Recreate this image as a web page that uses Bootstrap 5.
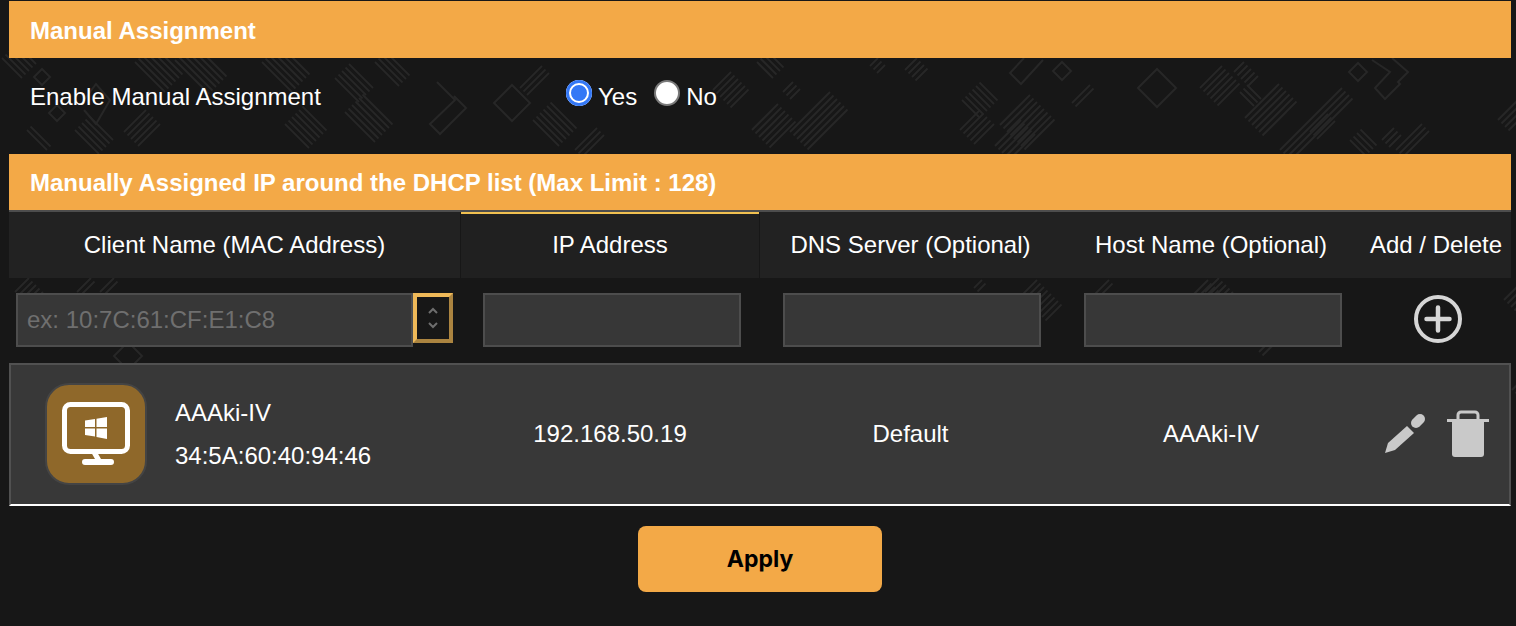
<!DOCTYPE html>
<html lang="en">
<head>
    <meta charset="UTF-8">
    <title>Manual Assignment</title>
    <link href="https://cdn.jsdelivr.net/npm/bootstrap@5.3.3/dist/css/bootstrap.min.css" rel="stylesheet">
    <style>
        body {
          background: #171717;
          color: #fff;
          font-family: "Liberation Sans", Arial, sans-serif;
          font-size: 24px;
          overflow: hidden;
        }
        .page-wrap {
          padding: 1px 5px 0 9px;
          width: 1516px;
          height: 626px;
        }
        .bg-art {
          position: absolute;
          left: 0;
          top: 0;
          z-index: 0;
        }
        .page-wrap > * {
          position: relative;
          z-index: 1;
        }
        .section-bar {
          background: #f3a947;
          font-weight: 700;
          height: 57px;
          padding: 2px 0 0 21px;
        }
        .section-bar.second {
          height: 56px;
        }
        .enable-row {
          height: 96px;
          padding: 0 0 18px 21px;
        }
        .enable-label {
          width: 536px;
        }
        .ring-radio {
          width: 26px;
          height: 26px;
          border-radius: 50%;
          background: #fff;
          border: 2px solid #7a7a7a;
          margin-right: 6px;
          margin-top: -8px;
        }
        .ring-radio.on {
          background: #3478f6;
          border: 0;
          box-shadow: inset 0 0 0 3px #3478f6, inset 0 0 0 5px #fff;
        }
        .radio-text {
          margin-right: 17px;
        }
        .col-grid {
          display: grid;
          grid-template-columns: 451px 300px 301px 300px 150px;
        }
        .head-grid {
          border-top: 2px solid #4d4d4d;
          height: 68px;
          text-align: center;
        }
        .head-cell {
          background: #222;
        }
        .head-cell.active {
          background: #202020;
          border-top: 2px solid #f0c050;
          padding-bottom: 2px;
          margin: 0 1px;
        }
        .input-grid {
          height: 85px;
          padding-top: 15px;
        }
        .fake-input {
          background: #373737;
          border: 2px solid #4d4d4d;
          border-radius: 0;
          color: #fff;
          height: 54px;
          font-size: 24px;
          box-shadow: none;
        }
        .fake-input:focus {
          background: #373737;
          border-color: #4d4d4d;
          color: #fff;
          box-shadow: none;
        }
        .fake-input::placeholder {
          color: #6f6f6f;
          opacity: 1;
        }
        .mac-input {
          width: 397px;
          margin-left: 7px;
          padding: 0 9px;
        }
        .plain-input {
          width: 258px;
          margin-left: 23px;
        }
        .pick-btn {
          width: 40px;
          height: 50px;
          border: 4px solid;
          border-color: #efb958 #ab8440 #ab8440 #efb958;
          background: #171717;
          padding: 0;
        }
        .add-icon {
          margin-left: 4px;
        }
        .client-row {
          background: #383838;
          border-top: 2px solid #515151;
          border-left: 2px solid #515151;
          border-right: 2px solid #515151;
          border-bottom: 2px solid #fff;
          height: 143px;
          padding-bottom: 2px;
          grid-template-columns: 449px 300px 301px 300px 148px;
        }
        .device-tile {
          width: 102px;
          height: 102px;
          border-radius: 24px;
          background: #8f682a;
          border: 2px solid #444;
          margin-left: 34px;
          margin-right: 28px;
        }
        .client-text {
          line-height: 43px;
        }
        .edit-icon {
          margin-left: 23px;
        }
        .trash-icon {
          margin-left: 21px;
        }
        .apply-btn {
          width: 244px;
          height: 66px;
          background: #f3a947;
          border: 0;
          border-radius: 8px;
          color: #000;
          font-family: Inter, "Liberation Sans", sans-serif;
          font-size: 23px;
          font-weight: 700;
        }
        .apply-wrap {
          padding-top: 20px;
        }
    </style>
</head>
<body>

<svg class="bg-art" id="bgArt" width="1516" height="626" fill="none" stroke="#272727" stroke-width="2"></svg>

<div class="page-wrap">
    <div class="section-bar d-flex align-items-center">Manual Assignment</div>

    <div class="enable-row d-flex align-items-center">
        <div class="enable-label">Enable Manual Assignment</div>
        <span class="ring-radio on"></span><span class="radio-text">Yes</span>
        <span class="ring-radio"></span><span>No</span>
    </div>

    <div class="section-bar second d-flex align-items-center">Manually Assigned IP around the DHCP list (Max Limit : 128)</div>

    <div class="col-grid head-grid">
        <div class="head-cell d-flex align-items-center justify-content-center">Client Name (MAC Address)</div>
        <div class="head-cell active d-flex align-items-center justify-content-center">IP Address</div>
        <div class="head-cell d-flex align-items-center justify-content-center">DNS Server (Optional)</div>
        <div class="head-cell d-flex align-items-center justify-content-center">Host Name (Optional)</div>
        <div class="head-cell d-flex align-items-center justify-content-center">Add / Delete</div>
    </div>

    <div class="col-grid input-grid">
        <div class="d-flex align-items-start">
            <input class="form-control fake-input mac-input" placeholder="ex: 10:7C:61:CF:E1:C8">
            <button type="button" class="pick-btn d-flex align-items-center justify-content-center" aria-label="Pick client">
                <svg width="12" height="22" viewBox="0 0 12 22" fill="none" stroke="#6e6e6e" stroke-width="2"><path d="M2 6l4-4 4 4M2 16l4 4 4-4"/></svg>
            </button>
        </div>
        <div><input class="form-control fake-input plain-input" aria-label="IP Address"></div>
        <div><input class="form-control fake-input plain-input" aria-label="DNS Server"></div>
        <div><input class="form-control fake-input plain-input" aria-label="Host Name"></div>
        <div class="d-flex justify-content-center">
            <svg class="add-icon" width="50" height="50" viewBox="0 0 50 50" fill="none" stroke="#d6d6d6"><circle cx="25" cy="26" r="22" stroke-width="4"/><path d="M25 14.500v23M13.500 26h23" stroke-width="4.500" stroke-linecap="round"/></svg>
        </div>
    </div>

    <div class="col-grid client-row">
        <div class="d-flex align-items-center">
            <div class="device-tile d-flex align-items-center justify-content-center">
                <svg width="68" height="63" viewBox="0 0 68 63" fill="#fff"><rect x="2.500" y="2.500" width="63" height="47" rx="6" fill="none" stroke="#fff" stroke-width="5"/><path d="M29 50h6l4 7h-6zM23 57h26a3 3 0 0 1 0 6H23a3 3 0 0 1 0-6z"/><path d="M23 18.500L33 17v8H23zM34.500 16.800L45 15v10H34.500zM23 26.500h10v8L23 33zM34.500 26.500H45V37l-10.500-2z"/></svg>
            </div>
            <div class="client-text">AAAki-IV<br>34:5A:60:40:94:46</div>
        </div>
        <div class="d-flex align-items-center justify-content-center">192.168.50.19</div>
        <div class="d-flex align-items-center justify-content-center">Default</div>
        <div class="d-flex align-items-center justify-content-center">AAAki-IV</div>
        <div class="d-flex align-items-center">
            <svg class="edit-icon" width="42" height="42" viewBox="0 0 42 42" fill="#c9c9c9"><path d="M1 40l3-10L23 13l7 7-19 17z"/><path d="M32 10l4-4" fill="none" stroke="#c9c9c9" stroke-width="10" stroke-linecap="round"/></svg>
            <svg class="trash-icon" width="42" height="48" viewBox="0 0 42 48" fill="#c9c9c9"><path d="M0 9h42v3H0z"/><path d="M11 9V5a3 3 0 0 1 3-3h14a3 3 0 0 1 3 3v4" fill="none" stroke="#c9c9c9" stroke-width="3"/><path d="M5 12h32v32a3 3 0 0 1-3 3H8a3 3 0 0 1-3-3z"/></svg>
        </div>
    </div>

    <div class="apply-wrap d-flex justify-content-center">
        <button type="button" class="apply-btn">Apply</button>
    </div>
</div>

<script>
    // background art: stripe groups [x, y, length, count, dir] and outlines
    const art = document.getElementById("bgArt");
    const stripes = [
      [2, 58, 20, 5, "\\"], [27, 130, 20, 2, "\\"], [75, 130, 24, 5, "\\"], [124, 132, 22, 5, "/"],
      [135, 62, 30, 6, "\\"], [175, 60, 34, 6, "\\"], [262, 62, 30, 6, "\\"], [335, 78, 24, 5, "\\"],
      [285, 124, 24, 6, "\\"], [345, 112, 30, 6, "\\"], [375, 62, 24, 4, "\\"],
      [533, 120, 26, 6, "\\"], [575, 150, 22, 3, "/"], [520, 88, 22, 3, "/"],
      [713, 90, 18, 6, "/"], [757, 62, 16, 4, "\\"], [783, 92, 10, 3, "/"], [752, 130, 26, 6, "/"], [790, 132, 40, 6, "/"],
      [870, 66, 8, 3, "/"], [905, 70, 12, 4, "/"], [962, 100, 18, 6, "\\"], [960, 130, 20, 5, "/"], [995, 146, 26, 5, "/"],
      [1000, 125, 30, 8, "/"], [1072, 103, 18, 2, "/"], [1200, 88, 22, 6, "/"], [1234, 72, 10, 5, "/"], [1240, 92, 14, 3, "\\"],
      [1245, 118, 34, 6, "/"], [1280, 150, 62, 4, "/"], [1310, 132, 18, 3, "/"],
      [1350, 140, 16, 4, "\\"], [1382, 140, 12, 3, "/"], [1396, 150, 26, 3, "/"], [1498, 120, 20, 4, "/"],
      [15, 292, 14, 9, "/"], [77, 292, 14, 2, "/"], [100, 292, 14, 2, "/"],
      [974, 288, 8, 2, "/"], [1021, 296, 16, 8, "/"], [1093, 296, 16, 2, "/"],
      [1176, 312, 32, 4, "/"], [1205, 292, 14, 5, "/"], [1259, 330, 24, 5, "/"], [1259, 352, 24, 2, "/"],
      [1504, 300, 16, 5, "/"], [1512, 390, 10, 3, "/"]
    ];
    let svg = "";
    stripes.forEach(([x0, y0, len, n, dir]) => {
      for (let i = 0; i < n; i++) {
        if (dir === "/") {
          svg += `<path d="M${x0 + i * 3.5} ${y0 + i * 3.5}l${len} ${-len}"/>`;
        } else {
          svg += `<path d="M${x0 + i * 3.5} ${y0 - i * 3.5}l${len} ${len}"/>`;
        }
      }
    });
    [[1157, 88, 19], [1062, 71, 9], [1358, 72, 9], [42, 77, 8], [57, 113, 8], [512, 103, 18], [128, 356, 14]].forEach(([x, y, r]) => {
      svg += `<path d="M${x - r} ${y}l${r} ${-r}l${r} ${r}l${-r} ${r}z"/>`;
    });
    svg += '<path d="M1024 58L1010 73l11 11 22-24"/>';
    svg += '<path d="M1372 60l18 12-15 16 10 11 15-15-2-2 10-10-16-14"/>';
    svg += '<path d="M84 100l12-16 14 16-14 24-12-14"/>';
    svg += '<path d="M437 82l18 18-25 24 10 10 26-26-12-12"/>';
    art.innerHTML = svg;
</script>

<script src="https://cdn.jsdelivr.net/npm/bootstrap@5.3.3/dist/js/bootstrap.bundle.min.js"></script>
</body>
</html>
